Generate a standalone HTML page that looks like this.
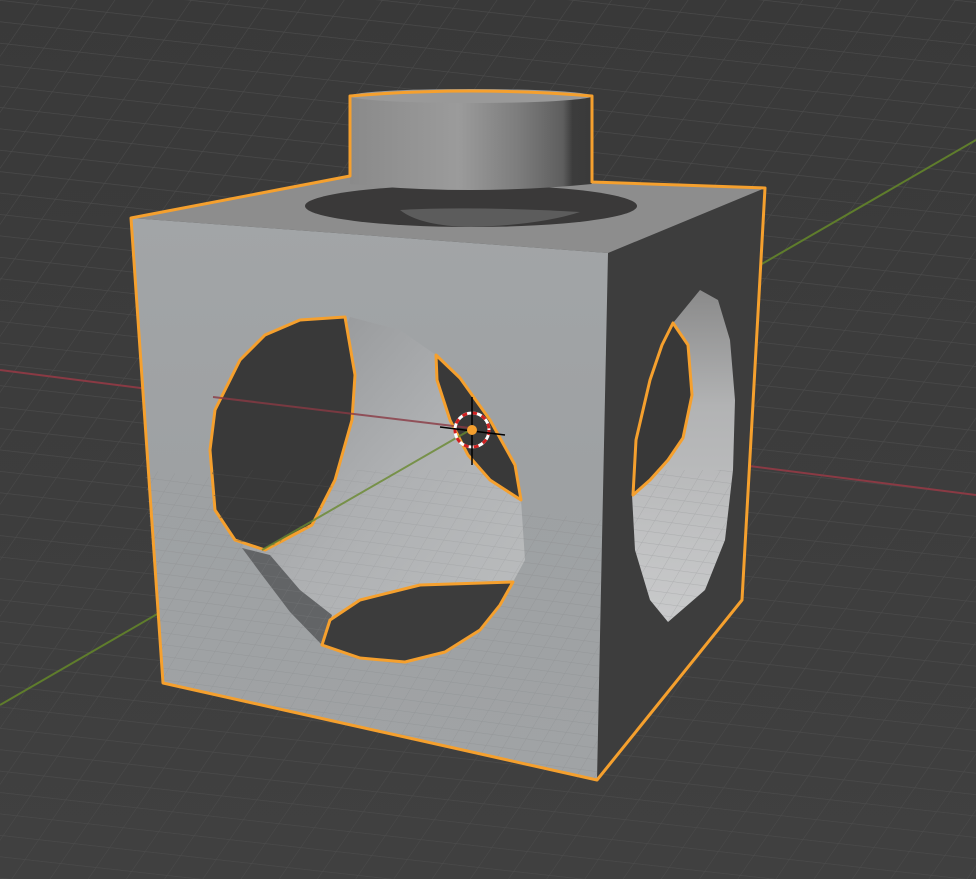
<!DOCTYPE html>
<html><head><meta charset="utf-8"><style>html,body{margin:0;padding:0;background:#3d3d3d;}svg{display:block}</style></head>
<body>
<svg width="976" height="879" viewBox="0 0 976 879" xmlns="http://www.w3.org/2000/svg">
<defs>
<linearGradient id="bg" x1="0" y1="0" x2="0" y2="1"><stop offset="0" stop-color="#393939"/><stop offset="1" stop-color="#404040"/></linearGradient>
<pattern id="grid" width="38" height="20" patternUnits="userSpaceOnUse" patternTransform="skewX(-30) rotate(6)"><path d="M0 0H38M0 0V20" stroke="#4b4b4b" stroke-width="1.2" fill="none"/></pattern>
<pattern id="grid2" width="18" height="11" patternUnits="userSpaceOnUse" patternTransform="skewX(-25) rotate(7)"><path d="M0 0H18M0 0V11" stroke="#888a8c" stroke-width="1" fill="none"/></pattern>
<linearGradient id="front" x1="0" y1="0" x2="0" y2="1"><stop offset="0" stop-color="#a2a5a7"/><stop offset="0.45" stop-color="#9ea1a3"/><stop offset="1" stop-color="#a0a3a5"/></linearGradient>
<linearGradient id="cyl" x1="0" y1="0" x2="1" y2="0"><stop offset="0" stop-color="#8a8a8a"/><stop offset="0.45" stop-color="#9b9b9b"/><stop offset="0.7" stop-color="#7c7c7c"/><stop offset="0.88" stop-color="#5e5e5e"/><stop offset="0.92" stop-color="#3c3c3c"/><stop offset="1" stop-color="#3a3a3a"/></linearGradient>
<linearGradient id="inner" x1="0" y1="0" x2="1" y2="1"><stop offset="0" stop-color="#8e9092"/><stop offset="0.5" stop-color="#aeb0b2"/><stop offset="1" stop-color="#bcbebf"/></linearGradient>
<linearGradient id="rcav" x1="0" y1="0" x2="0" y2="1"><stop offset="0" stop-color="#8a8a8a"/><stop offset="0.35" stop-color="#b2b3b4"/><stop offset="1" stop-color="#c9cacb"/></linearGradient>
<clipPath id="lower"><rect x="0" y="470" width="976" height="409"/></clipPath>
</defs>
<rect width="976" height="879" fill="url(#bg)"/>
<rect width="976" height="879" fill="url(#grid)"/>
<line x1="0" y1="370" x2="976" y2="495" stroke="#8a3a44" stroke-width="2"/>
<line x1="0" y1="705" x2="976" y2="140" stroke="#5f7d2c" stroke-width="2"/>

<polygon points="608,252 765,188 742,600 597,780" fill="#3d3d3d"/>
<polygon points="700,290 718,300 730,340 735,400 733,470 725,540 705,590 668,622 650,600 635,550 632,495 650,380 673,323" fill="url(#rcav)"/>
<polygon points="700,290 718,300 730,340 735,400 733,470 725,540 705,590 668,622 650,600 635,550 632,495 650,380 673,323" fill="url(#grid2)" opacity="0.35" clip-path="url(#lower)"/>
<polygon points="673,323 688,345 692,395 683,438 668,460 650,480 633,495 636,440 650,380 662,345" fill="#383838" stroke="#f5a02e" stroke-width="3" stroke-linejoin="round"/>

<polygon points="131,218 352,176 765,188 608,253" fill="#8d8d8d"/>
<ellipse cx="471" cy="206" rx="166" ry="21" fill="#3a3939"/>
<path d="M400 210 Q470 206 580 212 Q540 225 471 227 Q420 226 400 210Z" fill="#5c5c5c"/>

<path d="M350 96 L350 184 Q470 196 592 184 L592 96 Z" fill="url(#cyl)"/>
<ellipse cx="471" cy="96" rx="121" ry="7" fill="#999"/>

<polygon points="131,218 608,253 597,780 163,683" fill="url(#front)"/>
<polygon points="145,470 602,520 597,780 163,683" fill="url(#grid2)" opacity="0.45"/>
<polygon points="350,317 400,330 436,355 521,500 525,560 513,582 322,645 290,612 262,575 242,548" fill="url(#inner)"/>
<path d="M242 548 L262 575 L290 612 L322 645 L332 615 L300 590 L270 555Z" fill="#626466"/>
<polygon points="350,317 400,330 436,355 521,500 525,560 513,582 322,645 290,612 262,575 242,548" fill="url(#grid2)" opacity="0.3" clip-path="url(#lower)"/>
<g stroke="#f5a02e" stroke-width="3" stroke-linejoin="round">
<polygon points="345,317 355,375 352,420 335,480 312,525 265,550 235,540 215,510 210,450 215,410 240,360 265,335 300,320" fill="#393939"/>
<polygon points="436,355 460,378 490,420 515,465 521,500 490,480 468,455 450,420 437,380" fill="#393939"/>
<polygon points="322,645 330,620 360,600 420,585 513,582 500,605 480,630 445,652 405,662 360,658" fill="#3c3c3c"/>
</g>
<g clip-path="url(#lower)" opacity="0.6">
<polygon points="345,317 355,375 352,420 335,480 312,525 265,550 235,540 215,510 210,450 215,410 240,360 265,335 300,320" fill="url(#grid)"/>
</g>
<line x1="213" y1="397" x2="470" y2="428" stroke="#8a3a44" stroke-width="2" opacity="0.8"/>
<line x1="262" y1="550" x2="470" y2="430" stroke="#6a8a30" stroke-width="2" opacity="0.8"/>

<path d="M131 218 L350 176 L350 96 Q470 86 592 96 L592 182 L765 188 L742 600 L597 780 L163 683 Z" fill="none" stroke="#f5a02e" stroke-width="3" stroke-linejoin="round"/>

<g>
<circle cx="472" cy="430" r="17" fill="none" stroke="#fff" stroke-width="3"/>
<circle cx="472" cy="430" r="17" fill="none" stroke="#d02020" stroke-width="3" stroke-dasharray="5 5"/>
<line x1="472" y1="397" x2="472" y2="465" stroke="#000" stroke-width="1.5"/>
<line x1="440" y1="427" x2="505" y2="435" stroke="#000" stroke-width="1.5"/>
<circle cx="472" cy="430" r="5" fill="#f5a02e"/>
</g>
</svg>
</body></html>
